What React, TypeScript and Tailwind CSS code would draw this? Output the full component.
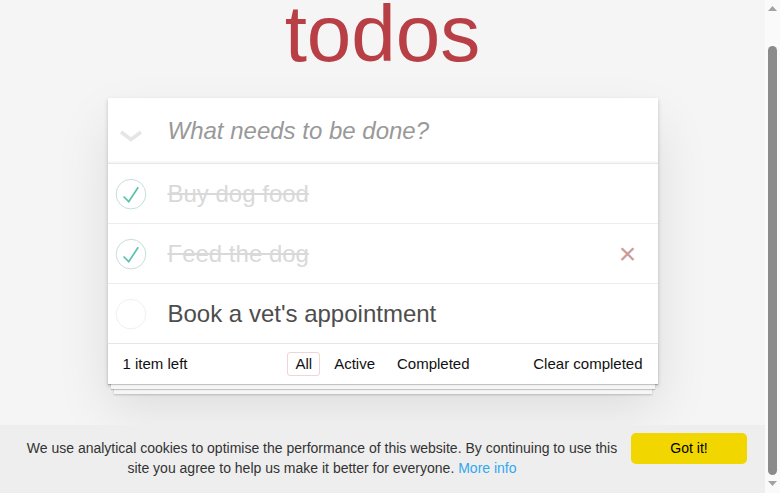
import React from "react";

const font = { fontFamily: '"Liberation Sans", Arial, sans-serif' };

function Toggle({ checked }: { checked: boolean }) {
  return (
    <svg width="40" height="40" viewBox="-10 -18 100 135" className="shrink-0">
      <circle cx="50" cy="50" r="50" fill="none" stroke={checked ? "#bddad5" : "#ededed"} strokeWidth="3" />
      {checked && <path fill="#5dc2af" d="M72 25L42 71 27 56l-4 4 20 20 34-52z" />}
    </svg>
  );
}

function Item({ text, done, hover, last }: { text: string; done: boolean; hover?: boolean; last?: boolean }) {
  return (
    <li className={`flex items-center ${last ? "h-[59px]" : "h-[60px] border-b border-[#ededed]"}`}>
      <div className="flex w-[60px] shrink-0 items-center">
        <Toggle checked={done} />
      </div>
      <span
        className={`flex-1 text-[24px] leading-[29px] ${done ? "text-[#d9d9d9] line-through" : "text-[#4d4d4d]"}`}
      >
        {text}
      </span>
      {hover && (
        <span className="mr-[10px] flex h-[40px] w-[40px] items-center justify-center text-[30px] leading-none text-[#cc9a9a]">
          ×
        </span>
      )}
    </li>
  );
}

export default function App() {
  return (
    <div className="flex h-[493px] w-[780px] overflow-hidden bg-[#f5f5f5]" style={font}>
      <div className="flex min-w-0 flex-1 flex-col">
        <div className="flex-1">
          <h1 className="h-[68px] text-center text-[80px] leading-[68px] text-[#b83f45]">todos</h1>
          <section className="mx-auto mt-[30px] w-[550px] bg-white shadow-[0_2px_4px_0_rgba(0,0,0,0.2),0_25px_50px_0_rgba(0,0,0,0.1)]">
            <div className="flex h-[65px] items-center shadow-[inset_0_-2px_1px_rgba(0,0,0,0.03)]">
              <div className="flex w-[60px] shrink-0 pl-[11px] pt-[11px]">
                <svg width="24" height="12" viewBox="0 0 24 12">
                  <polyline points="2,2 12,9.5 22,2" fill="none" stroke="#e6e6e6" strokeWidth="3.6" />
                </svg>
              </div>
              <span className="text-[24px] italic leading-[34px] text-[#999]">What needs to be done?</span>
            </div>
            <ul className="border-t border-[#e6e6e6]">
              <Item text="Buy dog food" done />
              <Item text="Feed the dog" done hover />
              <Item text="Book a vet's appointment" done={false} last />
            </ul>
            <footer className="grid h-[41px] grid-cols-[1fr_auto_1fr] items-center border-t border-[#e6e6e6] px-[15px] text-[15px] leading-[20px] text-[#111] shadow-[0_1px_1px_rgba(0,0,0,0.2),0_8px_0_-3px_#f6f6f6,0_9px_1px_-3px_rgba(0,0,0,0.2),0_16px_0_-6px_#f6f6f6,0_17px_2px_-6px_rgba(0,0,0,0.2)]">
              <span>1 item left</span>
              <div className="flex">
                <span className="mx-[3px] rounded-[3px] border border-[rgba(175,47,47,0.2)] px-[7px] py-[1px]">All</span>
                <span className="mx-[3px] border border-transparent px-[7px] py-[1px]">Active</span>
                <span className="mx-[3px] border border-transparent px-[7px] py-[1px]">Completed</span>
              </div>
              <span className="text-right">Clear completed</span>
            </footer>
          </section>
        </div>
        <div className="flex h-[68px] shrink-0 items-start bg-[#eeeeee] px-[18px] pt-[8px]">
          <p className="mr-[5px] mt-[5px] flex-1 text-center text-[14px] leading-[20px] text-[#333]">
            We use analytical cookies to optimise the performance of this website. By continuing to use this
            <br />
            site you agree to help us make it better for everyone.{" "}
            <span className="text-[#31a8f0]">More info</span>
          </p>
          <div className="flex h-[31px] w-[116px] items-center justify-center rounded-[5px] bg-[#f1d600] text-[14px] text-black">
            Got it!
          </div>
        </div>
      </div>
      <div className="flex w-[15px] shrink-0 flex-col items-center bg-[#fafafa] pt-[6px]">
        <svg width="9" height="5" viewBox="0 0 9 5">
          <polygon points="0,5 4.5,0 9,5" fill="#a3a3a3" />
        </svg>
        <div className="mt-[35px] h-[429px] w-[9px] rounded-full bg-[#8b8b8b]" />
        <svg width="9" height="5" viewBox="0 0 9 5" className="mt-[6px]">
          <polygon points="0,0 4.5,5 9,0" fill="#a3a3a3" />
        </svg>
      </div>
    </div>
  );
}
